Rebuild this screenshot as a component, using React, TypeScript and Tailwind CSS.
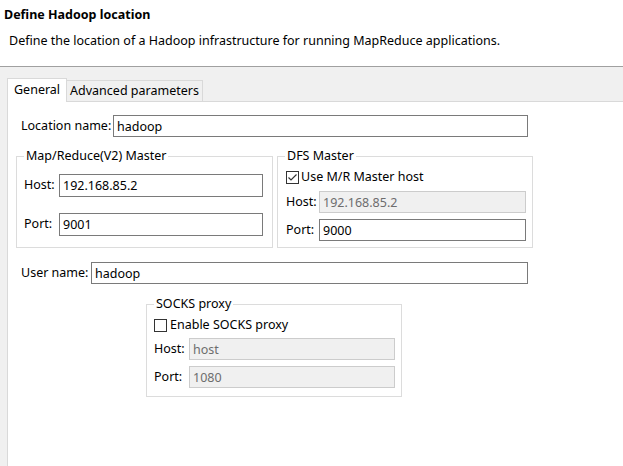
import React from "react";

function Field({ value, className }: { value: string; className: string }) {
  return (
    <input
      readOnly
      value={value}
      className={"h-[22px] border border-[#7a7a7a] bg-white px-[3px] text-[12.5px] text-black outline-none " + className}
    />
  );
}

function Disabled({ value, className }: { value: string; className: string }) {
  return (
    <input
      readOnly
      value={value}
      className={"h-[22px] border border-[#cccccc] bg-[#f0f0f0] px-[3px] text-[12.5px] text-[#6d6d6d] outline-none " + className}
    />
  );
}

function Check({ checked }: { checked?: boolean }) {
  return (
    <svg width="13" height="13" viewBox="0 0 13 13" className="shrink-0">
      <rect x="0.5" y="0.5" width="12" height="12" fill="#fff" stroke="#333" />
      {checked && <path d="M2.5 6.5 L5 9 L10.5 3.5" fill="none" stroke="#333" strokeWidth="1.2" />}
    </svg>
  );
}

export default function App() {
  return (
    <div className="w-[623px] h-[466px] overflow-hidden bg-[#f0f0f0] text-[12.5px] text-black flex flex-col font-['Noto_Sans',sans-serif]">
      {/* wizard header */}
      <div className="h-[67px] shrink-0 bg-white border-b border-[#a0a0a0]">
        <div className="pl-[4px] pt-[6px] font-bold leading-[18px]">Define Hadoop location</div>
        <div className="pl-[9px] mt-[8px] leading-[18px]">
          Define the location of a Hadoop infrastructure for running MapReduce applications.
        </div>
      </div>

      <div className="flex-1 flex flex-col pl-[7px] pt-[11px]">
        {/* tabs */}
        <div className="flex items-end h-[23px]">
          <div className="relative z-10 -mb-px h-[24px] bg-white border border-b-0 border-[#d9d9d9] px-[6px] leading-[22px]">
            General
          </div>
          <div className="h-[21px] border-t border-r border-[#d9d9d9] bg-[#f0f0f0] px-[3px] leading-[20px]">
            Advanced parameters
          </div>
        </div>

        {/* tab content */}
        <div className="flex-1 bg-white border-l border-t border-[#d9d9d9] flex flex-col">
          <div className="mt-[13px] ml-[13px] flex items-center">
            <span className="w-[92px]">Location name:</span>
            <Field value="hadoop" className="w-[415px]" />
          </div>

          <div className="mt-[11px] ml-[8px] flex">
            <fieldset className="w-[257px] h-[100px] border border-[#dcdcdc] pl-[7px]">
              <legend className="px-[2px] leading-[16px]">Map/Reduce(V2) Master</legend>
              <div className="mt-[10px] flex items-center">
                <span className="w-[35px]">Host:</span>
                <Field value="192.168.85.2" className="w-[204px] h-[23px]" />
              </div>
              <div className="mt-[16px] flex items-center">
                <span className="w-[35px]">Port:</span>
                <Field value="9001" className="w-[204px] h-[23px]" />
              </div>
            </fieldset>

            <fieldset className="ml-[4px] w-[256px] h-[100px] border border-[#dcdcdc] pl-[8px]">
              <legend className="px-[2px] -ml-[1px] leading-[16px]">DFS Master</legend>
              <div className="mt-[7px] flex items-center gap-[2px] h-[13px]">
                <Check checked />
                <span>Use M/R Master host</span>
              </div>
              <div className="mt-[7px] flex items-center">
                <span className="w-[33px]">Host:</span>
                <Disabled value="192.168.85.2" className="w-[207px]" />
              </div>
              <div className="mt-[6px] flex items-center">
                <span className="w-[33px]">Port:</span>
                <Field value="9000" className="w-[207px]" />
              </div>
            </fieldset>
          </div>

          <div className="mt-[14px] ml-[13px] flex items-center">
            <span className="w-[70px]">User name:</span>
            <Field value="hadoop" className="w-[437px]" />
          </div>

          <fieldset className="mt-[12px] ml-[138px] w-[256px] border border-[#dcdcdc] pl-[7px] pb-[8px]">
            <legend className="px-[2px] leading-[16px]">SOCKS proxy</legend>
            <div className="mt-[7px] flex items-center gap-[3px] h-[13px]">
              <Check />
              <span>Enable SOCKS proxy</span>
            </div>
            <div className="mt-[6px] flex items-center">
              <span className="w-[35px]">Host:</span>
              <Disabled value="host" className="w-[206px]" />
            </div>
            <div className="mt-[6px] flex items-center">
              <span className="w-[35px]">Port:</span>
              <Disabled value="1080" className="w-[206px]" />
            </div>
          </fieldset>
        </div>
      </div>
    </div>
  );
}
